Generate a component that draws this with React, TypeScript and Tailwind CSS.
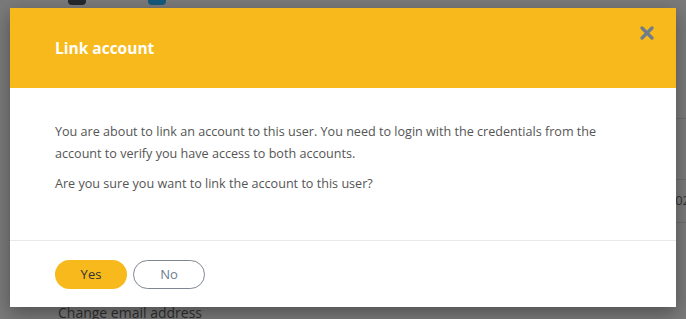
import React from 'react'

function CloseIcon() {
  return (
    <svg width="14" height="14" viewBox="0 0 14 14" aria-hidden="true">
      <path d="M2 2 L12 12 M12 2 L2 12" stroke="#6e7c8b" strokeWidth="3.2" strokeLinecap="round" />
    </svg>
  )
}

// the page that sits behind the dimmed overlay
function BackgroundPage() {
  return (
    <div className="flex h-[319px] flex-col bg-[#7a7a7a]">
      <div className="flex gap-[62px] pl-[68px]">
        <div className="h-[5px] w-[18px] rounded-b-sm bg-[#24292e]" />
        <div className="h-[5px] w-[18px] rounded-b-sm bg-[#155a7c]" />
      </div>
      <div className="mt-[113px] flex flex-col pl-[58px]">
        <div className="h-[61px] border-t border-[#6c6c6c]" />
        <div className="flex h-[44px] items-center justify-end border-t border-b border-[#6c6c6c] text-[13px] text-[#333]">
          <span className="-mr-[4px]">02</span>
        </div>
        <span className="mt-[79px] text-[14px] text-[#2e2e2e]">Change email address</span>
      </div>
    </div>
  )
}

export default function App() {
  return (
    <div className="relative h-[319px] w-[686px] overflow-hidden font-['Open_Sans',sans-serif]">
      <BackgroundPage />

      {/* modal dialog over the overlay */}
      <div className="absolute left-[10px] top-[8px] w-[666px] bg-white shadow-[0_6px_18px_rgba(0,0,0,0.35)]">
        <div className="flex h-[80px] items-start justify-between bg-[#f7b91c] pl-[45px] pr-[22px]">
          <h2 className="mt-[29px] text-[15.5px] font-bold text-white">Link account</h2>
          <button className="mt-[18px]"><CloseIcon /></button>
        </div>
        <div className="border-b border-[#e8e8e8] px-[45px] pb-[45px] pt-[33px] text-[12.6px] leading-[22px] text-[#555]">
          <p>You are about to link an account to this user. You need to login with the credentials from the account to verify you have access to both accounts.</p>
          <p className="mt-[8px]">Are you sure you want to link the account to this user?</p>
        </div>
        <div className="flex gap-[6px] px-[45px] pb-[18px] pt-[19px]">
          <button className="h-[29px] w-[72px] rounded-full bg-[#f7b91c] text-[13px] text-[#333]">Yes</button>
          <button className="h-[29px] w-[72px] rounded-full border border-[#7d8791] bg-white text-[13px] text-[#6b7d90]">No</button>
        </div>
      </div>
    </div>
  )
}
